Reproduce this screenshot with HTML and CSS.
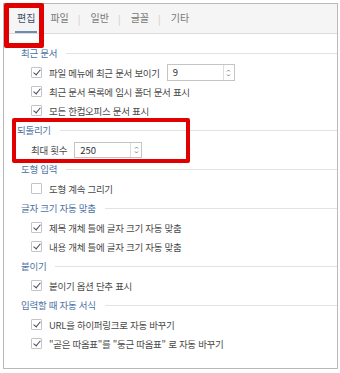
FILE: index.html
```html
<!DOCTYPE html>
<html lang="ko">
<head>
  <meta charset="UTF-8">
  <title>옵션 - 편집</title>
  <link rel="stylesheet" href="styles.css">
</head>
<body>

  <div class="frame">
    <!-- 탭 -->
    <div class="tabs">
      <span class="tab active">편집</span>
      <span class="tab">파일</span><span class="sep">|</span>
      <span class="tab">일반</span><span class="sep">|</span>
      <span class="tab">글꼴</span><span class="sep">|</span>
      <span class="tab">기타</span>
    </div>

    <div class="content">
      <div class="group-title"><span>최근 문서</span></div>
      <div class="row">
        <span class="check on"></span>파일 메뉴에 최근 문서 보이기
        <span class="spin wide"><span class="val">9</span><span class="arrows"><svg width="5" height="10" viewBox="0 0 5 10"><path d="M1 3.5 L2.5 2 L4 3.5 M1 6.5 L2.5 8 L4 6.5" fill="none" stroke="#777" stroke-width="0.9"/></svg></span></span>
      </div>
      <div class="row"><span class="check on"></span>최근 문서 목록에 임시 폴더 문서 표시</div>
      <div class="row"><span class="check on"></span>모든 한컴오피스 문서 표시</div>

      <div class="group-title undo"><span>되돌리기</span></div>
      <div class="row plain">
        최대 횟수
        <span class="spin"><span class="val">250</span><span class="arrows"><svg width="5" height="10" viewBox="0 0 5 10"><path d="M1 3.5 L2.5 2 L4 3.5 M1 6.5 L2.5 8 L4 6.5" fill="none" stroke="#777" stroke-width="0.9"/></svg></span></span>
      </div>

      <div class="group-title"><span>도형 입력</span></div>
      <div class="row"><span class="check"></span>도형 계속 그리기</div>

      <div class="group-title"><span>글자 크기 자동 맞춤</span></div>
      <div class="row"><span class="check on"></span>제목 개체 틀에 글자 크기 자동 맞춤</div>
      <div class="row"><span class="check on"></span>내용 개체 틀에 글자 크기 자동 맞춤</div>

      <div class="group-title"><span>붙이기</span></div>
      <div class="row"><span class="check on"></span>붙이기 옵션 단추 표시</div>

      <div class="group-title"><span>입력할 때 자동 서식</span></div>
      <div class="row"><span class="check on"></span>URL을 하이퍼링크로 자동 바꾸기</div>
      <div class="row"><span class="check on"></span>"곧은 따옴표"를 "둥근 따옴표" 로 자동 바꾸기</div>
    </div>
  </div>

  <!-- 강조 표시 -->
  <div class="mark mark-tab"></div>
  <div class="mark mark-undo"></div>

</body>
</html>
```

FILE: styles.css
```css
body {
  margin: 0;
  background: #fff;
  font-family: "Noto Sans CJK KR", "Noto Sans", sans-serif;
  font-size: 9.5px;
  letter-spacing: -0.3px;
  color: #4a4a4a;
}
.frame {
  position: relative;
  margin: 3px 0 0 3px;
  width: 333px;
  height: 364px;
  border: 1px solid #b9b9b9;
}
.tabs {
  display: flex;
  align-items: center;
  height: 29px;
  padding-left: 11px;
  background: #f5f5f5;
  border-bottom: 1px solid #dcdcdc;
  font-size: 10px;
  letter-spacing: 0;
}
.tab {
  color: #777;
  height: 29px;
  line-height: 27px;
  padding: 0 1px;
}
.tab.active {
  color: #3d4f6a;
  border-bottom: 2px solid #6d8bb5;
  height: 27px;
  padding: 0 2px;
  margin-right: 12px;
}
.sep {
  color: #ccc;
  margin: 0 9px 0 8px;
}
.content {
  padding-top: 9px;
}
.group-title {
  display: flex;
  align-items: center;
  height: 20px;
  padding-left: 17px;
  color: #4d73a3;
}
.group-title::after {
  content: "";
  flex: 1;
  height: 1px;
  background: #e3e3e3;
  margin-left: 9px;
}
.group-title.undo {
  padding-left: 13px;
}
.row {
  display: flex;
  align-items: center;
  height: 19px;
  padding-left: 27px;
}
.row.plain {
  padding-left: 27px;
}
.check {
  width: 9px;
  height: 9px;
  border: 1px solid #c4c4c4;
  border-radius: 1px;
  background: #fff;
  margin-right: 7px;
  position: relative;
}
.check.on::after {
  content: "";
  position: absolute;
  left: 3px;
  top: 0px;
  width: 3px;
  height: 6px;
  border: solid #3e4a5c;
  border-width: 0 1.5px 1.5px 0;
  transform: rotate(40deg);
}
.spin {
  display: flex;
  width: 66px;
  height: 14px;
  margin-left: 7px;
  border: 1px solid #c4c4c4;
  background: #fff;
}
.spin.wide {
  height: 15px;
}
.spin .val {
  flex: 1;
  padding-left: 5px;
  line-height: 14px;
  color: #333;
  letter-spacing: 0;
}
.arrows {
  width: 10px;
  border-left: 1px solid #ddd;
  display: flex;
  align-items: center;
  justify-content: center;
}
.mark {
  position: absolute;
  border: 5px solid #e00000;
  border-radius: 2px;
  box-sizing: border-box;
}
.mark-tab {
  left: 4px;
  top: 3px;
  width: 40px;
  height: 45px;
}
.mark-undo {
  left: 12px;
  top: 118px;
  width: 178px;
  height: 45px;
  border-width: 4px;
}
```
